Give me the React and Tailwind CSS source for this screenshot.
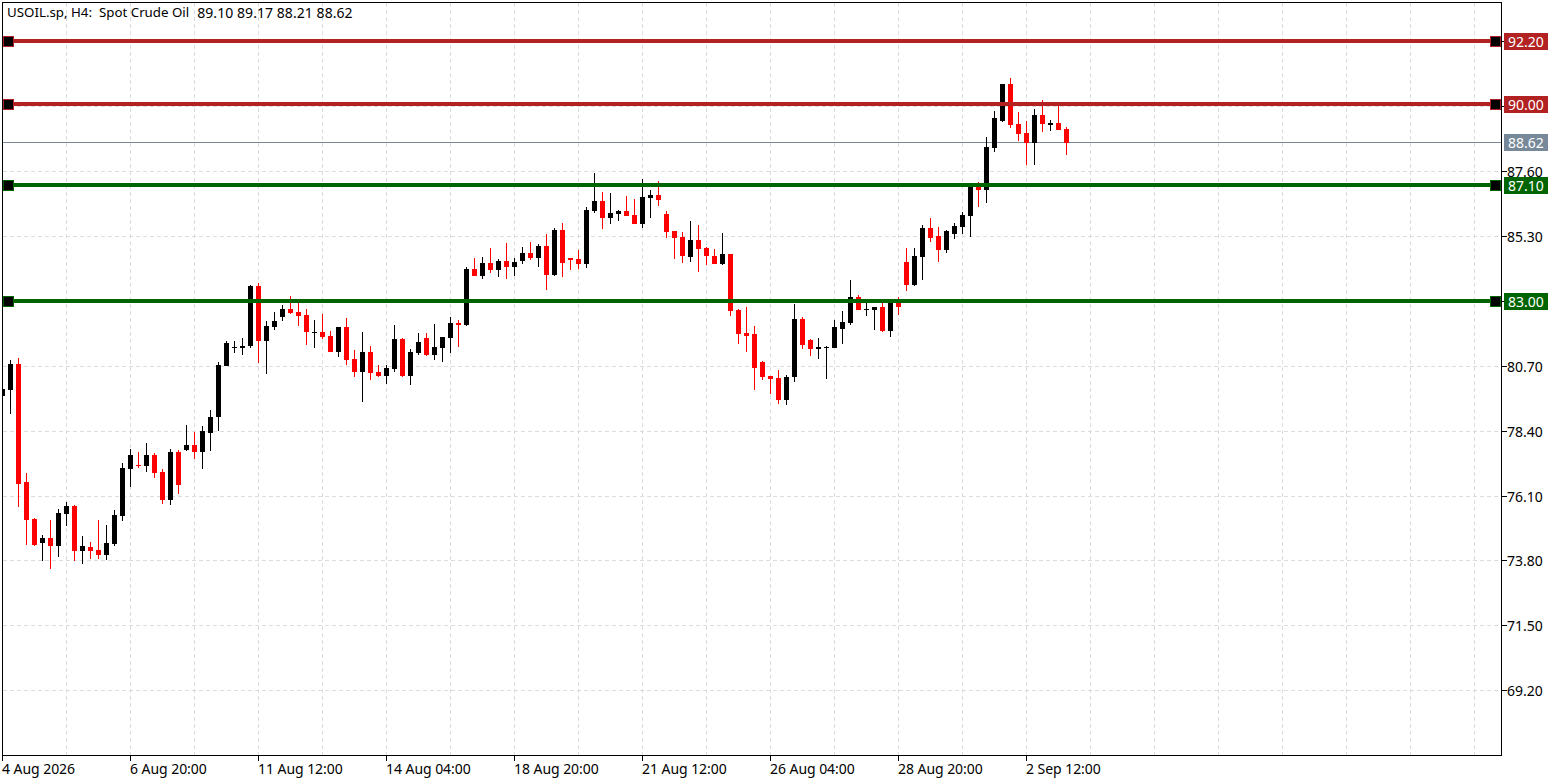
const C = "k389,396,361,413 k364,390,360,414 r364,484,358,507 r482,520,473,545 r519,545,518,546 k538,543,535,561 r538,546,520,569 k513,546,509,557 k506,514,502,526 r506,551,505,561 k546,551,536,564 r547,551,542,559 r550,555,520,559 k543,555,525,560 k515,544,510,546 k468,516,463,521 k455,469,449,487 r465,466,452,468 k455,466,443,472 r455,473,453,478 r472,500,469,504 k452,500,449,505 r452,485,450,494 k445,450,425,451 r445,452,432,459 k431,452,426,469 k417,433,410,451 k365,417,362,431 k343,366,341,366 k347,348,341,353 k346,348,338,355 k286,346,285,348 r286,341,283,363 k326,341,321,374 k321,327,312,330 k309,317,305,321 r309,313,296,314 r312,316,301,326 r315,332,309,345 k332,333,320,348 r332,337,314,339 r336,352,331,352 k327,352,327,357 r327,360,318,365 r359,372,350,377 k352,372,332,402 r352,373,346,380 r372,376,365,377 k368,376,365,384 k339,369,325,372 r339,376,338,377 k352,376,349,385 k342,353,333,355 r338,355,333,356 k347,355,324,360 k337,348,337,362 k323,338,317,353 r323,325,320,347 k269,325,267,326 r269,276,258,276 k263,276,257,279 r263,270,248,273 k261,270,259,277 r261,267,243,279 k262,267,258,276 k253,261,247,264 r253,258,242,260 k246,258,244,267 r246,275,234,290 k230,275,228,276 r230,263,223,277 r258,260,258,270 r259,264,250,269 k210,264,207,268 k201,211,173,213 r201,218,192,229 k213,218,193,224 k211,214,210,221 r211,216,196,216 r215,224,199,224 k197,224,179,228 k195,198,190,218 r195,200,181,206 r214,232,211,238 r231,238,231,259 r237,256,232,263 k240,257,221,262 r240,249,225,272 r248,256,247,265 r256,264,249,264 k254,264,233,265 r254,311,254,316 r310,334,309,344 r333,336,307,352 r334,368,326,390 r362,377,361,380 r376,379,376,394 r378,400,370,404 k377,400,375,405 k319,377,304,382 r319,345,317,349 r340,349,339,356 k347,349,338,359 k347,348,346,379 k327,348,320,348 k322,329,311,344 k297,323,280,325 r297,310,295,310 k309,310,303,316 k307,310,307,330 r307,331,303,332 k303,331,303,337 r303,307,297,315 r262,285,248,291 k256,285,248,286 k228,257,225,280 r228,238,218,242 r236,250,227,262 k231,250,230,253 k226,234,223,239 k215,227,212,234 k185,216,183,237 r184,190,182,207 k147,190,137,203 k118,148,111,152 k84,121,84,122 r84,125,78,128 r124,134,112,141 r133,143,121,165 k115,143,109,165 r115,124,100,132 k123,125,120,131 r123,130,103,130 r129,143,127,155"
  .split(" ")
  .map((s, i) => {
    const [a, b, c, d] = s.slice(1).split(",").map(Number);
    return { x: 2 + 8 * i, fill: s[0] === "k" ? "#000000" : "#ff0000", a, b, c, d };
  });

const gridX = Array.from({ length: 23 }, (_, i) => 66 + 64 * i);
const gridY = [41, 106, 171, 236, 301, 366, 431, 496, 560, 625, 690];
const scaleRows = [
  { h: "h-[65px]", t: "" },
  { h: "h-[65px]", t: "" },
  { h: "h-[65px]", t: "87.60" },
  { h: "h-[65px]", t: "85.30" },
  { h: "h-[65px]", t: "" },
  { h: "h-[65px]", t: "80.70" },
  { h: "h-[65px]", t: "78.40" },
  { h: "h-[64px]", t: "76.10" },
  { h: "h-[65px]", t: "73.80" },
  { h: "h-[65px]", t: "71.50" },
  { h: "h-[65px]", t: "69.20" },
];
const levels = [
  { y: 41, color: "#b22222", label: "92.20" },
  { y: 104, color: "#b22222", label: "90.00" },
  { y: 185, color: "#006400", label: "87.10" },
  { y: 301, color: "#006400", label: "83.00" },
];
const times = ["4 Aug 2026", "6 Aug 20:00", "11 Aug 12:00", "14 Aug 04:00", "18 Aug 20:00", "21 Aug 12:00", "26 Aug 04:00", "28 Aug 20:00", "2 Sep 12:00"];

function Chart() {
  return (
    <svg width="1498" height="752" viewBox="3 3 1498 752" shapeRendering="crispEdges" className="absolute left-0 top-0">
      {gridX.map((x) => (
        <line key={x} x1={x + 0.5} x2={x + 0.5} y1="3" y2="755" stroke="#dcdcdc" strokeDasharray="4 3" />
      ))}
      {gridY.map((y) => (
        <line key={y} x1="3" x2="1501" y1={y + 0.5} y2={y + 0.5} stroke="#dcdcdc" strokeDasharray="4 3" />
      ))}
      <rect x="3" y="142" width="1498" height="1" fill="#778899" />
      {C.map((k) => (
        <g key={k.x} fill={k.fill}>
          <rect x={k.x} y={k.c} width="1" height={k.d - k.c} />
          <rect x={k.x - 2} y={k.a} width="5" height={k.b - k.a} />
        </g>
      ))}
      {levels.map((l) => (
        <g key={l.y}>
          <rect x="3" y={l.y - 2} width="1498" height="4" fill={l.color} />
          <rect x="3" y={l.y - 5} width="11" height="11" fill={l.color} />
          <rect x="4" y={l.y - 4} width="9" height="9" fill="#000" />
          <rect x="1490" y={l.y - 5} width="11" height="11" fill={l.color} />
          <rect x="1491" y={l.y - 4} width="9" height="9" fill="#000" />
        </g>
      ))}
    </svg>
  );
}

function Tag({ y, color, children }) {
  return (
    <div className="absolute left-[2px] flex h-[17px] w-[44px] items-center pl-[4px] text-white" style={{ top: y - 10, background: color }}>
      {children}
    </div>
  );
}

export default function App() {
  return (
    <div className="w-[1563px] h-[782px] overflow-hidden bg-white pl-[2px] pt-[2px] font-['Noto_Sans',sans-serif] text-[14px] leading-[17px] text-black">
      <div className="flex">
        <div className="relative w-[1500px] h-[754px] border border-black">
          <Chart />
          <div className="absolute left-[4px] top-[1px] flex gap-[8px] whitespace-pre">
            <span className="text-[13.3px]">{"USOIL.sp, H4:  Spot Crude Oil"}</span>
            <span className="tracking-[0.06px]">89.10 89.17 88.21 88.62</span>
          </div>
        </div>
        <div className="relative flex w-[61px] h-[754px] flex-col pt-[31px]">
          {scaleRows.map((r, i) => (
            <div key={i} className={`flex shrink-0 items-start ${r.h}`}>
              <div className="mt-[8px] h-px w-[5px] bg-black" />
              <div>{r.t}</div>
            </div>
          ))}
          <Tag y={142} color="#778899">88.62</Tag>
          {levels.map((l) => (
            <Tag key={l.y} y={l.y} color={l.color}>{l.label}</Tag>
          ))}
        </div>
      </div>
      <div className="flex">
        {times.map((t) => (
          <div key={t} className="w-[128px]">
            <div className="h-[5px] w-px bg-black" />
            <div className="-mt-[1px] whitespace-nowrap tracking-[-0.05px]">{t}</div>
          </div>
        ))}
      </div>
    </div>
  );
}
